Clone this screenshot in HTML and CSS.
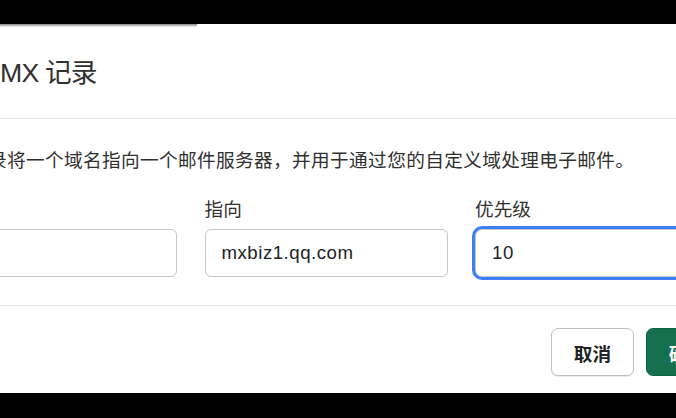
FILE: index.html
```html
<!DOCTYPE html>
<html lang="zh-CN">
<head>
<meta charset="utf-8">
<title>MX 记录</title>
<link rel="stylesheet" href="styles.css">
</head>
<body>
<div class="backdrop-top"></div>
<div class="dialog">
  <div class="smear"></div>
  <div class="dialog-header">
    <h2 class="dialog-title">MX 记录</h2>
  </div>
  <div class="dialog-body">
    <p class="dialog-desc">录将一个域名指向一个邮件服务器，并用于通过您的自定义域处理电子邮件。</p>
    <div class="fields">
      <div class="field">
        <div class="field-label"></div>
        <div class="input"></div>
      </div>
      <div class="field">
        <div class="field-label">指向</div>
        <div class="input">mxbiz1.qq.com</div>
      </div>
      <div class="field">
        <div class="field-label">优先级</div>
        <div class="input input-focused">10</div>
      </div>
    </div>
  </div>
  <div class="dialog-footer">
    <button class="btn btn-secondary">取消</button>
    <button class="btn btn-primary">确定</button>
  </div>
</div>
</body>
</html>
```

FILE: styles.css
```css
html, body {
  margin: 0;
  padding: 0;
}
body {
  width: 676px;
  height: 418px;
  overflow: hidden;
  background: #000;
  font-family: "Liberation Sans", "Noto Sans CJK SC", sans-serif;
  color: #303030;
}
.backdrop-top {
  height: 24px;
}
.dialog {
  margin-left: -86px;
  width: 835px;
  background: #fff;
  box-sizing: border-box;
}
.smear {
  margin-left: 86px;
  width: 197px;
  height: 3px;
  background: linear-gradient(to bottom, #6a6a6a, #c8c8c8 70%, #fff);
  opacity: 0.8;
}
.dialog-header {
  padding: 30px 20px 29px 20px;
  border-bottom: 1px solid #e1e3e5;
}
.dialog-title {
  margin: 0 0 0 66px;
  font-size: 26.67px;
  line-height: 32px;
  font-weight: 400;
  color: #303030;
  letter-spacing: -0.8px;
}
.dialog-body {
  padding: 28px 20px 28px 20px;
  border-bottom: 1px solid #e1e3e5;
}
.dialog-desc {
  margin: 0 0 0 54px;
  font-size: 18.67px;
  line-height: 28px;
  letter-spacing: 0.35px;
  white-space: nowrap;
}
.fields {
  display: grid;
  grid-template-columns: 243px 243px 1fr;
  column-gap: 27.5px;
  margin-top: 23px;
}
.field {
  display: flex;
  flex-direction: column;
}
.field-label {
  height: 24px;
  line-height: 24px;
  font-size: 18.67px;
  margin-bottom: 7px;
}
.input {
  box-sizing: border-box;
  height: 48px;
  border: 1px solid #c4c6c9;
  border-radius: 6px;
  padding: 0 16px;
  display: flex;
  align-items: center;
  font-size: 18.67px;
  letter-spacing: 0.5px;
  color: #202223;
  background: #fff;
}
.input-focused {
  box-shadow: 0 0 0 3px #3f7ff5;
  border-radius: 7px;
}
.dialog-footer {
  display: flex;
  justify-content: flex-end;
  gap: 12px;
  padding: 22px 20px 17px 20px;
}
.btn {
  box-sizing: border-box;
  width: 83px;
  height: 48px;
  border-radius: 7px;
  font-family: "Liberation Sans", "Noto Sans CJK SC", sans-serif;
  font-size: 18.67px;
  font-weight: 600;
  padding: 0;
  cursor: pointer;
}
.btn-secondary {
  background: #fff;
  color: #202223;
  border: 1px solid #bdc0c4;
  box-shadow: 0 1px 0 rgba(0, 0, 0, 0.08);
}
.btn-primary {
  background: #16704f;
  color: #fff;
  border: 1px solid #0f6546;
}
```
